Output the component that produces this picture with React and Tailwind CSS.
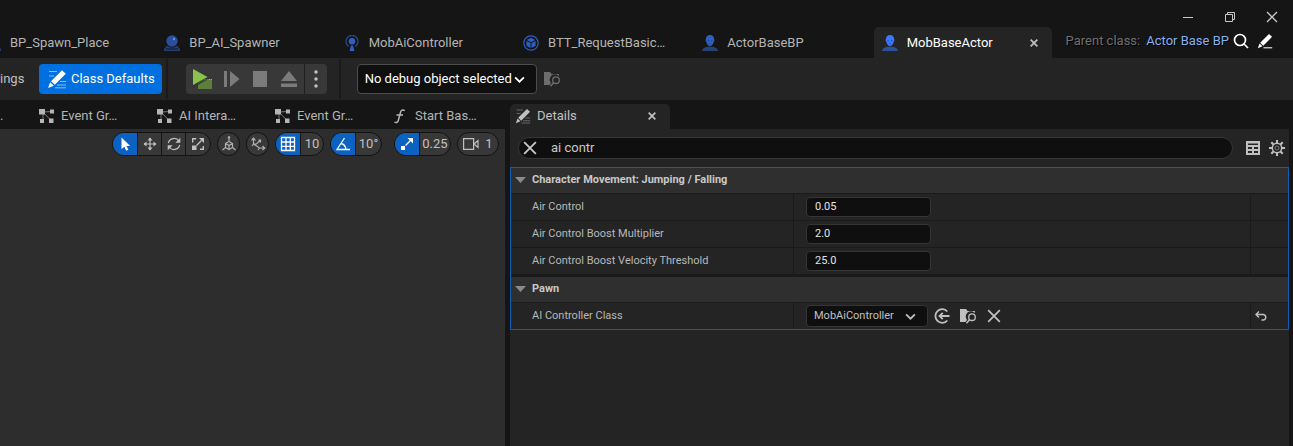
import React from "react";

function Pencil({ className, lines = true, light = "currentColor" }) {
  return (
    <svg className={className} viewBox="0 0 20 20" aria-hidden="true">
      {lines && (
        <path d="M2 2.500h8M2 7h5M13 12.500h6M10 16h9M8 18.800h11" stroke={light} strokeWidth="1" opacity=".55" fill="none" />
      )}
      {!lines && <path d="M8 18.500h11" stroke="currentColor" strokeWidth="1.300" />}
      <path d="M15 1.200 18.800 4.800 7.800 15.800 4 12.200ZM3.200 13.200 6.800 16.700 1 19Z" fill="currentColor" />
    </svg>
  );
}

function Person({ className }) {
  return (
    <svg className={className} viewBox="0 0 16 16" aria-hidden="true">
      <path d="M0 16c.3-2.400 2.200-3.200 5-4.200h6c2.800 1 4.700 1.800 5 4.200Z" fill="#2d5196" />
      <path d="M8 0C5.300 0 3.900 1.800 3.900 4.300c-.5.100-.5 1.900.3 2.300C4.700 9.200 6.200 11.200 8 11.200s3.300-2 3.800-4.600c.8-.4.800-2.200.3-2.300C12.100 1.800 10.700 0 8 0Z" fill="#3a78ff" />
      <path d="M5.500 5.800h1.500M9 5.800h1.500M7.200 8.900h1.600" stroke="#234ba6" strokeWidth="1" />
    </svg>
  );
}

function Orb({ className }) {
  return (
    <svg className={className} viewBox="0 0 16 16" aria-hidden="true">
      <path d="M2.500 11h11L16 14v2H0v-2Z" fill="#2b4a8e" />
      <path d="M2 14h12" stroke="#151b2c" strokeWidth="1" />
      <circle cx="8" cy="6.300" r="6.300" fill="#151515" />
      <circle cx="8" cy="6" r="5.700" fill="#2f63cf" />
      <circle cx="10" cy="4" r="1.200" fill="#8fb2ff" />
    </svg>
  );
}

function Beacon({ className }) {
  return (
    <svg className={className} viewBox="0 0 16 16" fill="none" aria-hidden="true">
      <path d="M4.800 11.500a6 6 0 1 1 6.400 0" stroke="#2d5db8" strokeWidth="1.200" />
      <circle cx="8" cy="6.200" r="3.200" fill="#3a78ff" />
      <path d="M7 10.500h2l1.500 5.500h-5Z" fill="#3a78ff" />
    </svg>
  );
}

function CubeRing({ className }) {
  return (
    <svg className={className} viewBox="0 0 16 16" fill="none" aria-hidden="true">
      <circle cx="8" cy="8" r="7.200" stroke="#3a78ff" strokeWidth="1.200" />
      <path d="M8 2.800 12.300 5 8 7.200 3.700 5ZM3.400 5.900 7.500 8v5L3.400 10.800ZM12.600 5.900 8.500 8v5l4.100-2.200Z" fill="#3a78ff" />
    </svg>
  );
}

function GraphIcon() {
  return (
    <svg className="h-4 w-4 shrink-0 text-[#b5b5b5]" viewBox="0 0 16 16" aria-hidden="true">
      <path d="M4 4 13 3.500M4 4l8 8.500M4 4v9.500" stroke="#777" strokeWidth="1" fill="none" />
      <path d="M0 1h6v5.500H0ZM11 1.500h4v4h-4ZM1 11h4v4H1ZM10 10.500h4.500v4.500H10Z" fill="currentColor" />
    </svg>
  );
}

function FolderSearch({ className }) {
  return (
    <svg className={className} viewBox="0 0 17 16" aria-hidden="true">
      <path d="M0 1h6l1.500 2H15v2a5.200 5.200 0 0 0-8 7L5.500 14H0Z" fill="currentColor" />
      <circle cx="12" cy="9.200" r="3.300" fill="none" stroke="currentColor" strokeWidth="1.300" />
      <path d="m9.500 11.800-3 3.500" stroke="currentColor" strokeWidth="1.500" />
    </svg>
  );
}

function Cross({ className, width = 1.5 }) {
  return (
    <svg className={className} viewBox="0 0 12 12" aria-hidden="true">
      <path d="m1 1 10 10M11 1 1 11" stroke="currentColor" strokeWidth={width} fill="none" />
    </svg>
  );
}

function Chevron({ className }) {
  return (
    <svg className={className} viewBox="0 0 10 10" aria-hidden="true">
      <path d="m1 3 4 4 4-4" stroke="currentColor" strokeWidth="1.600" fill="none" />
    </svg>
  );
}

const documents = [
  { name: "BP_Spawn_Place", Icon: Orb },
  { name: "BP_AI_Spawner", Icon: Orb },
  { name: "MobAiController", Icon: Beacon },
  { name: "BTT_RequestBasic…", Icon: CubeRing },
  { name: "ActorBaseBP", Icon: Person },
  { name: "MobBaseActor", Icon: Person, active: true },
];

function TitleBar() {
  return (
    <header className="bg-[#151515]">
      <div className="flex h-[27px] items-end justify-end gap-[26px] pr-[13px] text-[#c8c8c8]">
        <button aria-label="Minimize" className="h-5 w-4">
          <svg viewBox="0 0 16 20" className="h-5 w-4"><path d="M3 10.500h10" stroke="currentColor" /></svg>
        </button>
        <button aria-label="Restore" className="h-5 w-4">
          <svg viewBox="0 0 16 20" className="h-5 w-4" fill="none" stroke="currentColor">
            <path d="M3.500 7.500h7v7h-7ZM5.500 7V5.500h7v7H11" />
          </svg>
        </button>
        <button aria-label="Close" className="flex h-5 w-4 items-center justify-center">
          <Cross className="h-3 w-3" width={1.3} />
        </button>
      </div>
      <div className="flex h-[31px] items-stretch overflow-hidden">
        <nav className="-ml-[23px] grid w-[1075px] shrink-0 grid-cols-6 gap-px">
          {documents.map(({ name, Icon, active }) => (
            <div
              key={name}
              className={
                active
                  ? "flex items-center rounded-t-[5px] bg-[#242424] pr-3 pl-2 text-white"
                  : "flex items-center pr-3 pl-2 text-[#b4b4b4]"
              }
            >
              <button className="flex flex-1 items-center gap-[9px]">
                <Icon className={active ? "h-4 w-4 shrink-0" : "h-4 w-4 shrink-0 opacity-75"} />
                <span className="whitespace-nowrap">{name}</span>
              </button>
              {active && (
                <button aria-label="Close tab" className="flex h-3 w-3 items-center justify-center text-[#c0c0c0]">
                  <Cross className="h-2 w-2" width={2.6} />
                </button>
              )}
            </div>
          ))}
        </nav>
        <div className="flex flex-1 items-center justify-end pr-5 pb-1 whitespace-nowrap">
          <span className="text-[#707070] [text-shadow:1px_1px_0_#000]">Parent class:</span>
          <a href="#parent" className="ml-1.5 text-[#84b2f4] [text-shadow:1px_1px_0_#000]">Actor Base BP</a>
          <button aria-label="Find parent in Content Browser" className="ml-1 text-white">
            <svg className="h-4 w-4" viewBox="0 0 16 16" fill="none" stroke="currentColor" strokeWidth="1.700">
              <circle cx="7" cy="7" r="5.500" />
              <path d="m11 11 4 4" />
            </svg>
          </button>
          <button aria-label="Edit parent" className="ml-2 text-white">
            <Pencil className="h-4 w-4" lines={false} />
          </button>
        </div>
      </div>
    </header>
  );
}

function Toolbar() {
  return (
    <div className="flex h-[42px] items-center bg-[#242424]">
      <button className="w-[22px] text-right text-[#c0c0c0]">ings</button>
      <button className="ml-[17px] flex h-[30px] items-center gap-1 rounded bg-[#0070e0] pr-[7px] pl-2 whitespace-nowrap text-white">
        <Pencil className="h-5 w-5" />
        Class Defaults
      </button>
      <div className="ml-1 h-10 w-0.5 bg-[#1a1a1a]" />
      <div className="ml-[18px] flex h-[30px] overflow-hidden rounded bg-[#383838] text-[#7b7b7b]">
        <button aria-label="Play" className="flex w-8 items-center justify-center">
          <svg className="h-5 w-5" viewBox="0 0 20 20">
            <path d="M6 14.500 13 10h7v10H6Z" fill="#5c7f3c" />
            <path d="M1 0v16L15.500 8Z" fill="#8bc34a" />
            <path d="M13 10.500h7" stroke="#8bc34a" strokeDasharray="1 1" />
            <path d="M4 16.500 17 9" stroke="#383838" strokeWidth="1.200" />
          </svg>
        </button>
        <button aria-label="Step" className="flex w-7 items-center justify-center">
          <svg className="h-4 w-4" viewBox="0 0 16 16" fill="currentColor"><path d="M0 0h3v16H0ZM6 0v16L15.500 8Z" /></svg>
        </button>
        <button aria-label="Stop" className="flex w-7 items-center justify-center">
          <span className="h-4 w-3.5 bg-[#7b7b7b]" />
        </button>
        <button aria-label="Eject" className="flex w-[30px] items-center justify-center">
          <svg className="h-4 w-4" viewBox="0 0 16 16" fill="currentColor"><path d="m8 0 8 10H0ZM0 12.500h16V16H0Z" /></svg>
        </button>
        <button aria-label="More play options" className="flex w-[23px] items-center justify-center border-l border-[#202020] text-[#c4c4c4]">
          <svg className="h-[18px] w-1" viewBox="0 0 4 18" fill="currentColor">
            <circle cx="2" cy="2" r="1.700" /><circle cx="2" cy="9" r="1.700" /><circle cx="2" cy="16" r="1.700" />
          </svg>
        </button>
      </div>
      <div className="ml-3 h-10 w-0.5 bg-[#1a1a1a]" />
      <div className="ml-4 grid items-center">
        <select
          aria-label="Debug object"
          className="col-start-1 row-start-1 h-[30px] w-[180px] appearance-none rounded border border-[#4c4c4c] bg-[#0f0f0f] pl-[7px] text-white"
        >
          <option>No debug object selected</option>
        </select>
        <Chevron className="pointer-events-none col-start-1 row-start-1 mr-3 h-[11px] w-[11px] justify-self-end text-white" />
      </div>
      <button aria-label="Browse to debug object" className="ml-[7px] text-[#6d6d6d]">
        <FolderSearch className="h-4 w-[17px]" />
      </button>
    </div>
  );
}

const graphs = ["Event Gr…", "AI Intera…", "Event Gr…"];

function GraphTabs() {
  return (
    <nav className="flex h-[29px] items-center pt-0.5 text-[#b4b4b4]">
      <span className="w-1">.</span>
      <div className="ml-[35px] grid w-[466px] shrink-0 grid-cols-[118fr_118fr_118fr_112fr]">
        {graphs.map((label, i) => (
          <button key={i} className="flex items-center gap-1.5 whitespace-nowrap">
            <GraphIcon />
            {label}
          </button>
        ))}
        <button className="flex items-center gap-1.5 whitespace-nowrap">
          <svg className="h-4 w-4" viewBox="0 0 16 16" fill="none" stroke="currentColor" strokeWidth="1.500" aria-hidden="true">
            <path d="M11.500 3c-.6-1.400-3.200-1.500-3.800.7L5.300 12.500c-.5 2-2.400 2.700-3.800 1.500M3.500 7H10" />
          </svg>
          Start Bas…
        </button>
      </div>
    </nav>
  );
}

function Group({ children }) {
  return (
    <div className="flex h-6 divide-x divide-[#151515] overflow-hidden rounded-full border border-[#121212] bg-[#383838] text-[#c0c0c0]">
      {children}
    </div>
  );
}

function RoundTool({ label, children }) {
  return (
    <div className="flex h-6 w-[23px] justify-center overflow-hidden rounded-full border border-[#121212] bg-[#383838] text-[#b0b0b0]">
      <Tool label={label}>{children}</Tool>
    </div>
  );
}

function Tool({ label, on, children }) {
  return (
    <button
      aria-label={label}
      className={
        on
          ? "flex w-[25px] items-center justify-center bg-[#0b62c0] text-white"
          : "flex w-6 items-center justify-center"
      }
    >
      <svg className="h-4 w-4 shrink-0" viewBox="0 0 16 16" fill="none" stroke="currentColor" strokeWidth="1.200">
        {children}
      </svg>
    </button>
  );
}

function Viewport() {
  return (
    <section aria-label="Viewport" className="flex-1 bg-[#2d2d2d] pt-[3px] pr-1.5">
      <div className="flex justify-end gap-1.5">
        <Group>
          <Tool label="Select" on>
            <path d="M4.500 1.500v11.800l2.800-2.500 1.900 4 2.200-1-1.900-3.900h3.700Z" fill="currentColor" stroke="none" />
          </Tool>
          <Tool label="Move">
            <path d="M8 2v12M2 8h12" />
            <path d="m5.500 4.500 2.500-3 2.500 3ZM5.500 11.500l2.500 3 2.500-3ZM4.500 5.500l-3 2.500 3 2.500ZM11.500 5.500l3 2.500-3 2.500Z" fill="currentColor" stroke="none" />
          </Tool>
          <Tool label="Rotate">
            <path d="M2.300 7A6 6 0 0 1 13 5M13.700 9A6 6 0 0 1 3 11" />
            <path d="M14.300 1.800v5h-5ZM1.700 14.200v-5h5Z" fill="currentColor" stroke="none" />
          </Tool>
          <Tool label="Scale">
            <path d="M2.700 6.500V2.700h3.500M10 13.300h3.300V10M6.500 9.500l5-5" strokeWidth="1.400" />
            <path d="M9 2h5v5ZM2 9.500h4.500V14H2Z" fill="currentColor" stroke="none" />
          </Tool>
        </Group>
        <RoundTool label="World space">
          <path d="M8 0v6M4.500 7.500l3.500-2 3.500 2v4L8 13.500l-3.500-2ZM4.500 7.500 8 9.500l3.500-2M8 9.500v4M4.500 11.500l-3 2.500M11.500 11.500l3 2.500" />
          <path d="m6.300 2.300 1.700-2.300 1.700 2.300Z" fill="currentColor" stroke="none" />
        </RoundTool>
        <RoundTool label="Surface snapping">
          <path d="M3.500 2.500V8l6 4h5M3.500 8h3l4-4M3.500 8 2 10M9.500 12 8 14M1.500 4.500l2-2.500 2 2.500M12.500 10l2.200 2-2.200 2M8.500 4h2v2.500" />
        </RoundTool>
        <Group>
          <Tool label="Grid snapping" on>
            <path d="M1.500 1.500h13v13h-13ZM6 1.500v13M10.300 1.500v13M1.500 6h13M1.500 10.300h13" strokeWidth="1.300" />
          </Tool>
          <button className="w-[22px] text-center">10</button>
        </Group>
        <Group>
          <Tool label="Angle snapping" on>
            <path d="M15 13.500H2L9.500 2M6 7.500c3 .5 4.500 2.500 5 6" strokeWidth="1.300" />
          </Tool>
          <button className="w-[25px] text-center">10°</button>
        </Group>
        <div className="ml-1.5">
          <Group>
            <Tool label="Scale snapping" on>
              <path d="m6.500 9.500 5-5" strokeWidth="1.300" />
              <path d="M8.500 2H14v5.500ZM2 10h4v4H2Z" fill="currentColor" stroke="none" />
            </Tool>
            <button className="w-[30px] text-center">0.25</button>
          </Group>
        </div>
        <Group>
          <button className="flex w-10 items-center justify-center gap-1.5" aria-label="Camera speed 1">
            <svg className="h-3 w-4" viewBox="0 0 16 12" fill="none" stroke="currentColor" strokeWidth="1.200">
              <path d="M.6.600h10v10.800H.6ZM11 6l4-3.500v7Z" />
            </svg>
            1
          </button>
        </Group>
      </div>
    </section>
  );
}

function Category({ title }) {
  return (
    <h2 className="border-b border-[#1a1a1a] bg-[#2f2f2f]">
      <button className="flex h-[25px] w-full items-center gap-1.5 pb-0.5 pl-1 text-[11px] font-bold text-[#c8c8c8]">
        <svg className="h-1.5 w-[11px]" viewBox="0 0 11 6" aria-hidden="true"><path d="M0 0h11L5.500 6Z" fill="#8a8a8a" /></svg>
        {title}
      </button>
    </h2>
  );
}

function Row({ id, label, last, reset, children }) {
  return (
    <div
      className={
        last
          ? "grid h-[26px] grid-cols-[283fr_457fr_37px] text-[11px]"
          : "grid h-[27px] grid-cols-[283fr_457fr_37px] border-b border-[#1a1a1a] text-[11px]"
      }
    >
      <label htmlFor={id} className="flex items-center border-r border-[#1a1a1a] pl-[21px] text-[#b8b8b8]">{label}</label>
      <div className="flex items-center border-r border-[#1a1a1a] pl-3">{children}</div>
      <div className="flex items-center pl-1">{reset}</div>
    </div>
  );
}

function NumberField({ id, value }) {
  return (
    <input
      id={id}
      defaultValue={value}
      className="h-5 w-[125px] rounded border border-[#353535] bg-[#0f0f0f] px-2 pb-0.5 text-[11px] text-[#e4e4e4] outline-none"
    />
  );
}

function Details() {
  return (
    <aside className="mr-1 flex min-w-0 flex-1 flex-col">
      <div className="flex h-[29px] items-end">
        <div className="flex h-[25px] w-40 items-center rounded-t-[5px] bg-[#242424] pr-3 pb-0.5 pl-[5px] text-[#c0c0c0]">
          <Pencil className="mr-1.5 h-4 w-4" />
          <span className="flex-1">Details</span>
          <button aria-label="Close Details" className="flex h-3 w-3 items-center justify-center">
            <Cross className="h-2 w-2" width={2.6} />
          </button>
        </div>
      </div>
      <div className="flex-1 bg-[#242424]">
        <div className="flex items-center pt-2 pr-1 pb-2 pl-2">
          <div className="flex h-[22px] flex-1 items-center rounded-full border border-[#353535] bg-[#0f0f0f] pl-1 text-[#c8c8c8]">
            <button aria-label="Clear search">
              <Cross className="h-3.5 w-3.5" width={1.6} />
            </button>
            <input aria-label="Search details" defaultValue="ai contr" className="ml-3.5 h-5 flex-1 bg-transparent pb-0.5 outline-none" />
          </div>
          <button aria-label="Property matrix" className="ml-[13px]">
            <svg className="h-3.5 w-3.5" viewBox="0 0 14 14">
              <path d="M0 0h14v14H0Z" fill="#c0c0c0" />
              <path d="M2 2.500h10v1.500H2ZM2 6h4v2H2ZM8 6h4v2H8ZM2 10h4v2H2ZM8 10h4v2H8Z" fill="#242424" />
            </svg>
          </button>
          <button aria-label="Details settings" className="ml-[9px]">
            <svg className="h-4 w-4" viewBox="0 0 16 16" fill="none" stroke="#c0c0c0">
              <circle cx="8" cy="8" r="4.700" strokeWidth="1.500" />
              <circle cx="8" cy="8" r="2" stroke="#777" />
              <path d="M8 0v3M8 13v3M0 8h3M13 8h3M2.300 2.300l2.200 2.200M11.500 11.500l2.200 2.200M2.300 13.700l2.200-2.200M11.500 4.500l2.200-2.200" strokeWidth="2" />
            </svg>
          </button>
        </div>
        <div className="border border-[#0d5eb5]">
          <Category title="Character Movement: Jumping / Falling" />
          <Row id="air-control" label="Air Control"><NumberField id="air-control" value="0.05" /></Row>
          <Row id="boost-multiplier" label="Air Control Boost Multiplier"><NumberField id="boost-multiplier" value="2.0" /></Row>
          <Row id="boost-threshold" label="Air Control Boost Velocity Threshold"><NumberField id="boost-threshold" value="25.0" /></Row>
          <div className="border-t-2 border-[#1a1a1a]">
            <Category title="Pawn" />
          </div>
          <Row
            id="controller-class"
            label="AI Controller Class"
            last
            reset={
              <button aria-label="Reset to default" className="text-[#c0c0c0]">
                <svg className="h-3 w-3" viewBox="0 0 12 12" fill="none" stroke="currentColor" strokeWidth="1.400">
                  <path d="M4 1.500 1 4.500l3 3M1 4.500h7.500a2.800 2.800 0 0 1 0 5.500H6.500" />
                </svg>
              </button>
            }
          >
            <div className="grid items-center">
              <select
                id="controller-class"
                className="col-start-1 row-start-1 h-[22px] w-[122px] appearance-none rounded border border-[#353535] bg-[#0f0f0f] pl-[7px] text-[11px] text-[#c0c0c0]"
              >
                <option>MobAiController</option>
              </select>
              <Chevron className="pointer-events-none col-start-1 row-start-1 mr-3 h-[11px] w-[11px] justify-self-end text-[#c0c0c0]" />
            </div>
            <div className="ml-1.5 flex items-center gap-2.5 text-[#c0c0c0]">
              <button aria-label="Use selected asset">
                <svg className="h-4 w-4" viewBox="0 0 16 16" fill="none" stroke="currentColor">
                  <path d="M13.300 3.500A6.800 6.800 0 1 0 13.300 12.500" strokeWidth="1.800" />
                  <path d="M15.500 8H6M8.800 4.800 5.500 8l3.300 3.200" strokeWidth="1.800" />
                </svg>
              </button>
              <button aria-label="Browse to asset"><FolderSearch className="h-4 w-[17px]" /></button>
              <button aria-label="Clear"><Cross className="h-3.5 w-3.5" width={1.5} /></button>
            </div>
          </Row>
        </div>
      </div>
    </aside>
  );
}

export default function App() {
  return (
    <div className="flex min-h-screen flex-col overflow-hidden bg-[#151515] font-[Roboto,sans-serif] text-[13px] leading-4">
      <TitleBar />
      <Toolbar />
      <main className="flex flex-1 gap-[5px]">
        <div className="flex w-[505px] shrink-0 flex-col">
          <GraphTabs />
          <Viewport />
        </div>
        <Details />
      </main>
    </div>
  );
}
